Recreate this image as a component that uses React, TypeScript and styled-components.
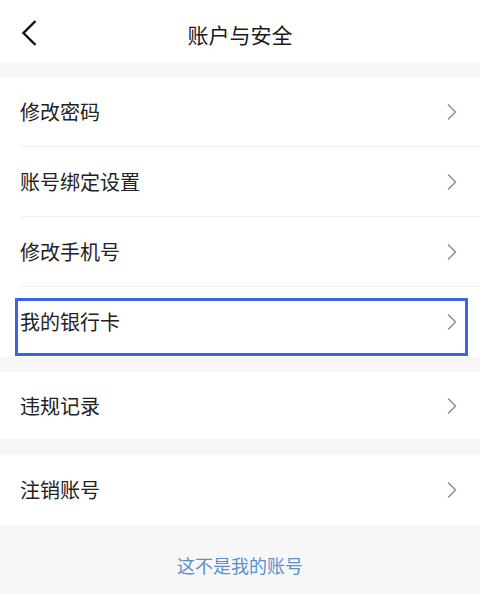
import React from "react";
import styled, { createGlobalStyle } from "styled-components";

const Global = createGlobalStyle`
  html, body { margin: 0; padding: 0; background: #f7f7f7; }
  body { font-family: "Noto Sans CJK SC", "Noto Sans", sans-serif; }
  * { box-sizing: border-box; }
`;

const Page = styled.div`
  width: 480px;
  height: 594px;
  background: #f7f7f7;
  overflow: hidden;
  display: flex;
  flex-direction: column;
`;

const Header = styled.div`
  height: 62px;
  background: #fff;
  display: grid;
  grid-template-columns: 60px 1fr 60px;
  align-items: center;
`;

const BackBtn = styled.div`
  padding-left: 20px;
  display: flex;
  align-items: center;
  height: 100%;
  padding-top: 4px;
`;

const Title = styled.div`
  text-align: center;
  font-size: 21px;
  color: #1a1a1a;
  line-height: 1;
  padding-top: 6px;
`;

const Gap = styled.div<{ $h: number }>`
  height: ${(p) => p.$h}px;
  background: #f7f7f7;
`;

const Group = styled.div`
  background: #fff;
`;

const Row = styled.div<{ $divider?: boolean; $h?: number }>`
  position: relative;
  height: ${(p) => p.$h ?? 70}px;
  margin-left: 20px;
  padding-right: 22px;
  display: flex;
  align-items: center;
  justify-content: space-between;
  border-bottom: ${(p) => (p.$divider ? "1px solid #f0f0f0" : "none")};
`;

const Label = styled.span`
  font-size: 20px;
  color: #222;
  line-height: 1;
`;

const Highlight = styled.div`
  position: absolute;
  left: -5px;
  right: 12px;
  top: 11px;
  bottom: 1px;
  border: 3px solid #3d63e0;
  pointer-events: none;
`;

const Footer = styled.div`
  flex: 1;
  display: flex;
  justify-content: center;
  padding-top: 31px;
`;

const Link = styled.span`
  font-size: 18px;
  color: #5a8fd0;
  line-height: 1;
`;

const Chevron = () => (
  <svg width="12" height="18" viewBox="0 0 12 18">
    <path d="M2 1.5 L9.5 9 L2 16.5" fill="none" stroke="#8a8a8a" strokeWidth="1.4" />
  </svg>
);

const Back = () => (
  <svg width="18" height="28" viewBox="0 0 18 28">
    <path d="M15.5 2 L3.5 14 L15.5 26" fill="none" stroke="#111" strokeWidth="2.4" />
  </svg>
);

type Item = { label: string; divider?: boolean; highlight?: boolean; h?: number };

const Item = ({ label, divider, highlight, h }: Item) => (
  <Row $divider={divider} $h={h}>
    <Label>{label}</Label>
    <Chevron />
    {highlight && <Highlight />}
  </Row>
);

export default function App() {
  return (
    <Page>
      <Global />
      <Header>
        <BackBtn>
          <Back />
        </BackBtn>
        <Title>账户与安全</Title>
        <div />
      </Header>
      <Gap $h={15} />
      <Group>
        <Item label="修改密码" divider />
        <Item label="账号绑定设置" divider />
        <Item label="修改手机号" divider />
        <Item label="我的银行卡" highlight />
      </Group>
      <Gap $h={15} />
      <Group>
        <Item label="违规记录" h={67} />
      </Group>
      <Gap $h={16} />
      <Group>
        <Item label="注销账号" />
      </Group>
      <Footer>
        <Link>这不是我的账号</Link>
      </Footer>
    </Page>
  );
}
